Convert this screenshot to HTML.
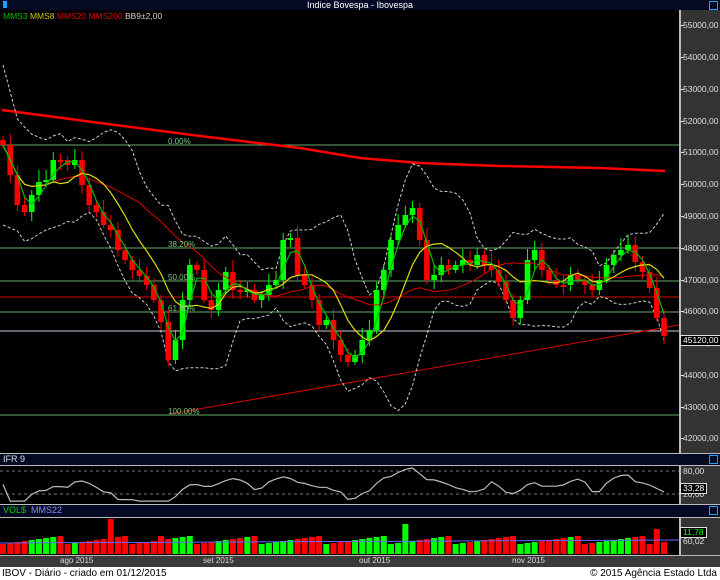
<!DOCTYPE html>
<html><head><meta charset="utf-8">
<style>
*{margin:0;padding:0;box-sizing:border-box}
body{width:720px;height:580px;background:#000;overflow:hidden;font-family:"Liberation Sans",sans-serif;position:relative}
.abs{position:absolute}
.hdr{background:#050a24;color:#ddd;font-size:9px;line-height:11px}
.ax{background:#333;border-left:2px solid #bbb}
.lbl{position:absolute;left:683px;font-size:8.5px;color:#ddd;line-height:10px}
.tk{position:absolute;left:681px;width:3px;height:1px;background:#ddd}
.ico{position:absolute;width:9px;height:9px;border:1.5px solid #19a3ff}
.box{position:absolute;left:680px;height:11px;border:1px solid #ddd;background:#000;font-size:8.5px;line-height:9px;padding:0 2px;color:#fff}
</style></head><body>
<div class="abs hdr" style="left:0;top:0;width:720px;height:10px;text-align:center;line-height:10px;color:#fff">Indice Bovespa - Ibovespa</div>
<div class="abs" style="left:3px;top:1px;width:4px;height:7px;background:#19a3ff"></div>
<div class="ico" style="left:709px;top:1px"></div>
<div class="abs ax" style="left:679px;top:10px;width:41px;height:443px"></div>
<div class="abs" style="left:0;top:453px;width:720px;height:1px;background:#bbb"></div>
<div class="abs hdr" style="left:0;top:454px;width:720px;height:11px;padding-left:3px">IFR 9</div>
<div class="ico" style="left:709px;top:455px"></div>
<div class="abs" style="left:0;top:465px;width:720px;height:1px;background:#bbb"></div>
<div class="abs ax" style="left:679px;top:466px;width:41px;height:38px"></div>
<div class="abs" style="left:0;top:504px;width:720px;height:1px;background:#bbb"></div>
<div class="abs hdr" style="left:0;top:505px;width:720px;height:12px;padding-left:3px"><span style="color:#0c0">VOL$</span> <span style="color:#88f">&nbsp;MMS22</span></div>
<div class="ico" style="left:709px;top:506px"></div>
<div class="abs" style="left:0;top:517px;width:720px;height:1px;background:#bbb"></div>
<div class="abs ax" style="left:679px;top:518px;width:41px;height:37px"></div>
<div class="abs" style="left:0;top:555px;width:720px;height:12px;background:#3a3a3a;border-top:1px solid #bbb"></div>
<div class="abs" style="left:0;top:567px;width:720px;height:13px;background:#fff;font-size:10px;line-height:13px;color:#000"><span style="position:absolute;left:2px">IBOV - Diário - criado em 01/12/2015</span><span style="position:absolute;right:3px">© 2015 Agência Estado Ltda</span></div>
<div class="abs" style="top:556px;left:60px;font-size:8px;color:#ddd">ago 2015</div>
<div class="abs" style="top:556px;left:203px;font-size:8px;color:#ddd">set 2015</div>
<div class="abs" style="top:556px;left:359px;font-size:8px;color:#ddd">out 2015</div>
<div class="abs" style="top:556px;left:512px;font-size:8px;color:#ddd">nov 2015</div>

<svg id="s" class="abs" style="left:0;top:0" width="720" height="580"></svg>

<div class="abs" style="left:3px;top:11px;font-size:8.5px;line-height:10px"><span style="color:#0b0">MMS3</span> <span style="color:#cc0">MMS8</span> <span style="color:#d00">MMS20</span> <span style="color:#d00">MMS200</span> <span style="color:#ccc">BB9±2,00</span></div>
<div class="abs" style="left:168px;top:137px;font-size:8px;color:#7c7">0.00%</div>
<div class="abs" style="left:168px;top:240px;font-size:8px;color:#7c7">38.20%</div>
<div class="abs" style="left:168px;top:273px;font-size:8px;color:#7c7">50.00%</div>
<div class="abs" style="left:168px;top:304px;font-size:8px;color:#7c7">61.80%</div>
<div class="abs" style="left:168px;top:407px;font-size:8px;color:#7c7">100.00%</div>

<div class="lbl" style="top:20px">55000,00</div><div class="tk" style="top:25px"></div>
<div class="lbl" style="top:52px">54000,00</div><div class="tk" style="top:57px"></div>
<div class="lbl" style="top:84px">53000,00</div><div class="tk" style="top:89px"></div>
<div class="lbl" style="top:116px">52000,00</div><div class="tk" style="top:121px"></div>
<div class="lbl" style="top:147px">51000,00</div><div class="tk" style="top:152px"></div>
<div class="lbl" style="top:179px">50000,00</div><div class="tk" style="top:184px"></div>
<div class="lbl" style="top:211px">49000,00</div><div class="tk" style="top:216px"></div>
<div class="lbl" style="top:243px">48000,00</div><div class="tk" style="top:248px"></div>
<div class="lbl" style="top:275px">47000,00</div><div class="tk" style="top:280px"></div>
<div class="lbl" style="top:306px">46000,00</div><div class="tk" style="top:311px"></div>
<div class="lbl" style="top:338px">45000,00</div>
<div class="lbl" style="top:370px">44000,00</div><div class="tk" style="top:375px"></div>
<div class="lbl" style="top:402px">43000,00</div><div class="tk" style="top:407px"></div>
<div class="lbl" style="top:433px">42000,00</div><div class="tk" style="top:438px"></div>
<div class="box" style="top:335px">45120,00</div>
<div class="lbl" style="top:466px">80,00</div>
<div class="lbl" style="top:489px">20,00</div>
<div class="box" style="top:483px">33,28</div>
<div class="lbl" style="top:536px">60,02</div>
<div class="box" style="top:527px;color:#0f0">11,78</div>

<script>
var S=document.getElementById('s'),h='';
function L(x1,y1,x2,y2,c,w,d){h+='<line x1="'+x1+'" y1="'+y1+'" x2="'+x2+'" y2="'+y2+'" stroke="'+c+'" stroke-width="'+(w||1)+'"'+(d?' stroke-dasharray="'+d+'"':'')+'/>';}
function P(pts,c,w,d){h+='<polyline fill="none" points="'+pts.map(function(p){return p[0].toFixed(1)+','+p[1].toFixed(1)}).join(' ')+'" stroke="'+c+'" stroke-width="'+(w||1)+'"'+(d?' stroke-dasharray="'+d+'"':'')+'/>';}
[[145,'#6a6'],[248,'#6a6'],[281,'#6a6'],[312,'#6a6'],[415,'#6a6']].forEach(function(f){L(0,f[0],679,f[0],f[1],1)});
L(0,297,679,297,'#d00',1);
L(0,331,679,331,'#ccd',1);
L(170,414,679,325,'#d00',1);
P([[2,110],[100,123],[200,136],[300,148],[360,158],[420,163],[500,166],[600,168],[665,171]],'#f00',2.5);
var c=[145,175,205,212,195,182,180,160,160,165,160,185,205,212,225,230,250,260,270,276,285,300,322,360,340,300,265,270,300,310,290,272,290,292,290,300,295,285,280,240,238,275,285,300,325,320,340,355,362,355,340,330,290,270,240,225,215,208,240,280,275,265,270,265,260,265,255,265,270,282,300,318,300,260,250,270,280,285,285,275,280,285,290,280,265,255,250,245,262,272,288,318,336];
var n=c.length,x0=3,dx=(664-3)/(n-1),X=function(i){return x0+i*dx};
var o=[140].concat(c.slice(0,n-1));
function sma(k){var r=[];for(var i=0;i<n;i++){var a=Math.max(0,i-k+1),s=0;for(var j=a;j<=i;j++)s+=c[j];r.push([X(i),s/(i-a+1)]);}return r;}
var up=[],dn=[];for(var i=0;i<n;i++){var a=Math.max(0,i-8),s=0,q=0,m;for(var j=a;j<=i;j++)s+=c[j];m=s/(i-a+1);for(j=a;j<=i;j++)q+=(c[j]-m)*(c[j]-m);var sd=Math.sqrt(q/(i-a+1));if(i<3)sd=20+(3-i)*6;up.push([X(i),m-2*sd-4]);dn.push([X(i),m+2*sd+4]);}
P(up,'#ccc',1,'3,2');P(dn,'#ccc',1,'3,2');
for(i=0;i<n;i++){var t=Math.min(o[i],c[i]),b=Math.max(o[i],c[i]);if(b-t<2)b=t+2;var col=c[i]<o[i]?'#0f0':'#f00';var x=X(i);L(x,t-4-(i*7%9),x,b+3+(i*5%7),col,1);h+='<rect x="'+(x-2.8)+'" y="'+t+'" width="5.6" height="'+(b-t)+'" fill="'+col+'"/>';}
P(sma(20),'#d00',1);P(sma(8),'#dd0',1.2);P(sma(3),'#0b0',1.2);
var r=[];for(i=0;i<n;i++){var a=Math.max(1,i-8),g=0,l=0;for(j=a;j<=i;j++){var d=c[j-1]-c[j];if(d>0)g+=d;else l-=d;}var v=(g+l)?g/(g+l):0.5;r.push([X(i),503-(v*0.9+0.05)*37]);}
L(0,471,679,471,'#777',1,'3,3');L(0,494,679,494,'#777',1,'3,3');
P(r,'#bbb',1.2);
for(i=0;i<n;i++){var hh=10+((i*37)%9);if(i==15)hh=35;if(i==56)hh=30;if(i==91)hh=25;if(i==22)hh=18;var col=c[i]<o[i]?'#0f0':'#f00';h+='<rect x="'+(X(i)-3)+'" y="'+(554-hh)+'" width="6" height="'+hh+'" fill="'+col+'"/>';}
L(0,543,679,540,'#66f',1);
S.innerHTML=h;
</script>
</body></html>
